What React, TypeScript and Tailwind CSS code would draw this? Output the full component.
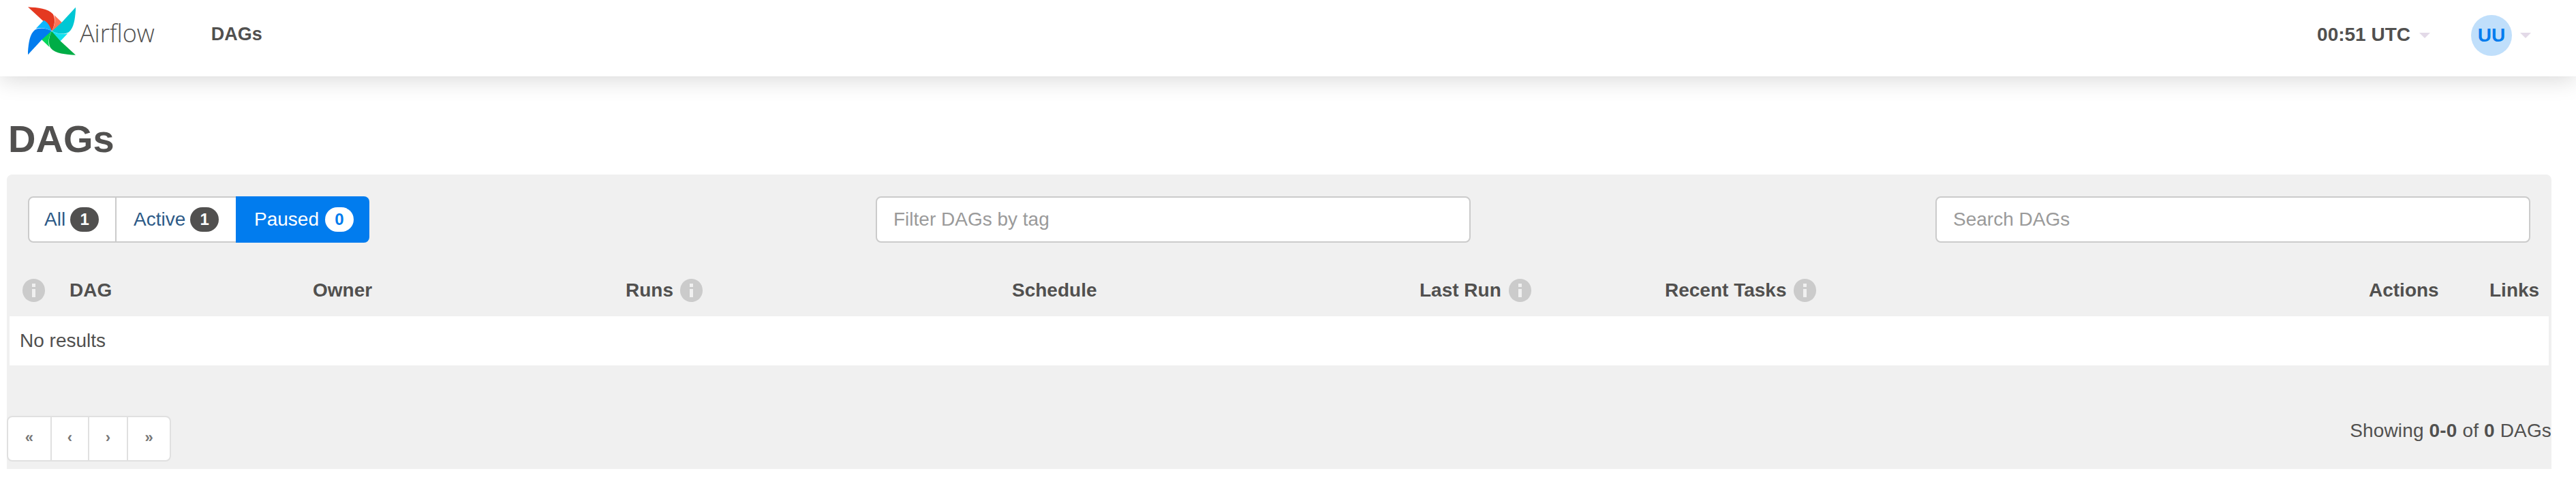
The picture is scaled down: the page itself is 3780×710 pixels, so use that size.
import React from "react";

const BLADES = [
  { main: "#e43921", light: "#ff7557", rot: 0 },
  { main: "#00c7d4", light: "#11e1ee", rot: 90 },
  { main: "#00ad46", light: "#04d659", rot: 180 },
  { main: "#017cee", light: "#0cb6ff", rot: 270 },
];

function Logo() {
  return (
    <svg viewBox="122 30 211 213" className="w-[70px] h-[71px] shrink-0">
      {BLADES.map((b) => (
        <g key={b.rot} transform={`rotate(${b.rot} 227.5 136.5)`}>
          <path d="M122 30 C165 33 212 36 233 62 C245 85 240 112 228 136 L190 93 Z" fill={b.main} />
          <path d="M228 136 C240 112 245 90 238 66 L275 101 C268 118 250 128 228 136 Z" fill={b.light} />
        </g>
      ))}
    </svg>
  );
}

function Caret() {
  return <span className="w-0 h-0 border-x-[8px] border-x-transparent border-t-[8px] border-t-[#e3dae8]" />;
}

function Info() {
  return (
    <span className="w-[33px] h-[34px] rounded-full bg-[#cbcbcb] flex flex-col items-center justify-center gap-[3px] shrink-0">
      <span className="w-[5px] h-[5px] bg-[#f0f0f0]" />
      <span className="w-[5px] h-[12px] bg-[#f0f0f0]" />
    </span>
  );
}

function Badge({ children, invert }: { children: React.ReactNode; invert?: boolean }) {
  return (
    <span
      className={`h-[36px] w-[42px] rounded-[18px] flex items-center justify-center text-[24px] font-bold leading-none ${
        invert ? "bg-white text-[#017cee]" : "bg-[#51504f] text-white"
      }`}
    >
      {children}
    </span>
  );
}

function Pills() {
  return (
    <div className="flex h-[68px] w-[501px] shrink-0 text-[28px] text-[#2d5a87]">
      <div className="w-[130px] h-full bg-white border-2 border-[#cbcbcb] rounded-l-[8px] flex items-center pl-[22px] gap-[7px]">
        All <Badge>1</Badge>
      </div>
      <div className="w-[175px] h-full bg-white border-y-2 border-[#cbcbcb] flex items-center pl-[25px] gap-[7px]">
        Active <Badge>1</Badge>
      </div>
      <div className="w-[196px] h-full bg-[#017cee] text-white rounded-r-[8px] flex items-center pl-[27px] gap-[9px]">
        Paused <Badge invert>0</Badge>
      </div>
    </div>
  );
}

function Field({ placeholder, className }: { placeholder: string; className: string }) {
  return (
    <input
      readOnly
      placeholder={placeholder}
      className={`h-[68px] bg-white border-2 border-[#cbcbcb] rounded-[8px] pl-[24px] pr-[25px] text-[28px] placeholder:text-[#9a9a9a] outline-none ${className}`}
    />
  );
}

function Pager() {
  const cells = [
    { t: "«", w: "w-[65px]" },
    { t: "‹", w: "w-[56px]" },
    { t: "›", w: "w-[58px]" },
    { t: "»", w: "w-[62px]" },
  ];
  return (
    <div className="flex h-[67px] w-[241px] bg-white border-2 border-[#e0e0e0] rounded-[8px] divide-x-2 divide-[#e0e0e0] text-[#777777] text-[22px] font-bold">
      {cells.map((c) => (
        <div key={c.t} className={`${c.w} flex items-center justify-center pb-[3px]`}>
          {c.t}
        </div>
      ))}
    </div>
  );
}

export default function App() {
  return (
    <div
      className="w-[3780px] h-[710px] overflow-hidden bg-white text-[#51504f] text-[28px] leading-none"
      style={{ fontFamily: '"Liberation Sans", Arial, sans-serif' }}
    >
      <header className="relative z-10 h-[112px] bg-white shadow-[0_4px_32px_rgba(0,0,0,0.16)] flex items-start">
        <div className="ml-[41px] mt-[10px] flex items-start">
          <Logo />
          <span
            className="ml-[6px] mt-[17px] text-[36px] font-light leading-[44px]"
            style={{ fontFamily: '"Open Sans", sans-serif' }}
          >
            Airflow
          </span>
        </div>
        <span className="ml-[83px] mt-[35px] font-bold text-[27px] leading-[30px]">DAGs</span>
        <div className="ml-auto mt-[22px] mr-[66px] flex items-start">
          <span className="mt-[13px] font-bold text-[28px] leading-[32px]">00:51 UTC</span>
          <span className="ml-[13px] mt-[26px] flex"><Caret /></span>
          <span className="ml-[60px] w-[60px] h-[60px] rounded-full bg-[#c0dffb] text-[#017cee] font-bold text-[28px] flex items-center justify-center">
            UU
          </span>
          <span className="ml-[12px] mt-[26px] flex"><Caret /></span>
        </div>
      </header>

      <main className="pl-[10px] pr-[36px]">
        <h1 className="ml-[2px] mt-[60px] mb-[4px] h-[80px] text-[56px] font-bold leading-[64px]">DAGs</h1>

        <section className="h-[432px] bg-[#f0f0f0] rounded-t-[8px] flex flex-col">
          <div className="mt-[32px] pl-[31px] flex items-center">
            <Pills />
            <Field placeholder="Filter DAGs by tag" className="w-[873px] ml-[743px]" />
            <Field placeholder="Search DAGs" className="w-[873px] ml-[682px]" />
          </div>

          <div className="mt-[36px] mb-[4px] h-[68px] grid grid-cols-[92px_357px_459px_568px_597px_360px_1033px_177px_1fr] items-center font-bold text-[28px] leading-[32px]">
            <div className="pl-[23px]"><Info /></div>
            <div>DAG</div>
            <div>Owner</div>
            <div className="flex items-center gap-[10px]">Runs <Info /></div>
            <div className="-ml-[1px]">Schedule</div>
            <div className="flex items-center gap-[11px]">Last Run <Info /></div>
            <div className="flex items-center gap-[11px]">Recent Tasks <Info /></div>
            <div>Actions</div>
            <div>Links</div>
          </div>

          <div className="mx-[4px] h-[72px] bg-white flex items-center pl-[15px]">No results</div>

          <div className="mt-[74px] flex items-start justify-between">
            <Pager />
            <div className="mt-[6px] leading-[32px] whitespace-nowrap tracking-[0.15px]">
              Showing <b>0-0</b> of <b>0</b> DAGs
            </div>
          </div>
        </section>
      </main>
    </div>
  );
}
